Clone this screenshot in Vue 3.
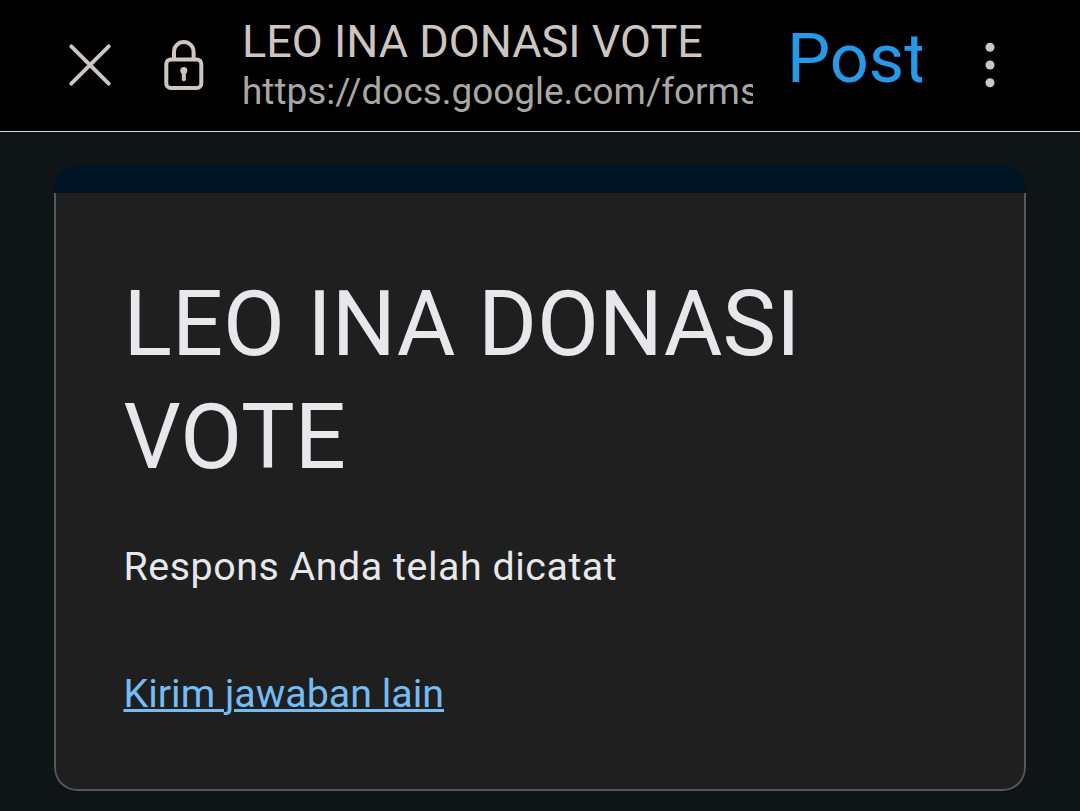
<template>
  <div class="page">
    <header class="toolbar">
      <button class="icon-button close-button" type="button" aria-label="Tutup">
        <svg width="44" height="44" viewBox="0 0 44 44" fill="none" stroke="currentColor" stroke-width="4" stroke-linecap="round">
          <path d="M3.3 3.3L40.7 40.7M40.7 3.3L3.3 40.7" />
        </svg>
      </button>
      <svg class="lock-icon" width="40" height="52" viewBox="0 0 40 52" fill="none" stroke="currentColor">
        <rect x="2.3" y="19.4" width="35" height="28.6" rx="4.5" stroke-width="4" />
        <path d="M10 19V11.8a9.8 9.8 0 0 1 19.6 0V19" stroke-width="4" />
        <circle cx="19.8" cy="30.6" r="3.5" fill="currentColor" stroke="none" />
        <path d="M19.8 31v8.2" stroke-width="4" stroke-linecap="round" />
      </svg>
      <div class="address">
        <div class="address-title">{{ title }}</div>
        <div class="address-url">{{ url }}</div>
      </div>
      <button class="post-button" type="button">Post</button>
      <button class="icon-button menu-button" type="button" aria-label="Menu">
        <svg width="10" height="46" viewBox="0 0 10 46" fill="currentColor">
          <circle v-for="y in dots" :key="y" cx="5" :cy="y" r="4.5" />
        </svg>
      </button>
    </header>

    <main class="content">
      <div class="card">
        <div class="card-band"></div>
        <div class="card-body">
          <h1>{{ title }}</h1>
          <p>Respons Anda telah dicatat</p>
          <a href="#" @click.prevent>Kirim jawaban lain</a>
        </div>
      </div>
    </main>
  </div>
</template>

<script setup>
const title = 'LEO INA DONASI VOTE'
const url = 'https://docs.google.com/forms'
const dots = [5.2, 23, 40.8]
</script>

<style>
body {
  margin: 0;
  background: #0f1416;
}
</style>

<style scoped>
.page {
  height: 811px;
  overflow: hidden;
  display: flex;
  flex-direction: column;
  font-family: Roboto, "Liberation Sans", sans-serif;
  background: #0f1416;
}

button {
  padding: 0;
  border: none;
  background: none;
  color: inherit;
  font-family: inherit;
}

/* ツールバー */
.toolbar {
  display: flex;
  align-items: flex-start;
  height: 131px;
  border-bottom: 1px solid #d5dddc;
  background: #000;
  color: #cdc5bf;
}
.toolbar svg { display: block; }
.close-button { margin: 43px 0 0 68px; }
.lock-icon { margin: 40px 0 0 52px; }

.address {
  width: 511px;
  margin: 15px 0 0 38px;
  overflow: hidden;
  white-space: nowrap;
}
.address-title {
  font-size: 45px;
  line-height: 54px;
}
.address-url {
  margin-top: 1px;
  font-size: 36.9px;
  line-height: 44px;
  color: #aaa7a3;
}

.post-button {
  width: 135px;
  margin: 19px 0 0 34px;
  overflow: hidden;
  white-space: nowrap;
  text-align: left;
  font-size: 68.5px;
  line-height: 80px;
  color: #2699ea;
}
.menu-button { margin: 42px 0 0 63px; }

/* 回答カード */
.content { padding: 33px 54px 20px; }
.card {
  border-radius: 23px;
  overflow: hidden;
}
.card-band {
  height: 28px;
  background: #001523;
}
.card-body {
  box-sizing: border-box;
  height: 598px;
  padding: 75px 67.5px 0;
  border: 2px solid #56585a;
  border-top: none;
  border-radius: 0 0 23px 23px;
  background: #1f1f1f;
  color: #e6e8ec;
}
h1 {
  margin: 0;
  font-size: 90px;
  font-weight: 400;
  line-height: 113px;
}
p {
  margin: 45px 0 71px;
  font-size: 39.375px;
  line-height: 56px;
  letter-spacing: 0.54px;
}
a {
  font-size: 39.375px;
  line-height: 56px;
  color: #74bdf4;
  text-decoration-thickness: 3px;
}
</style>
